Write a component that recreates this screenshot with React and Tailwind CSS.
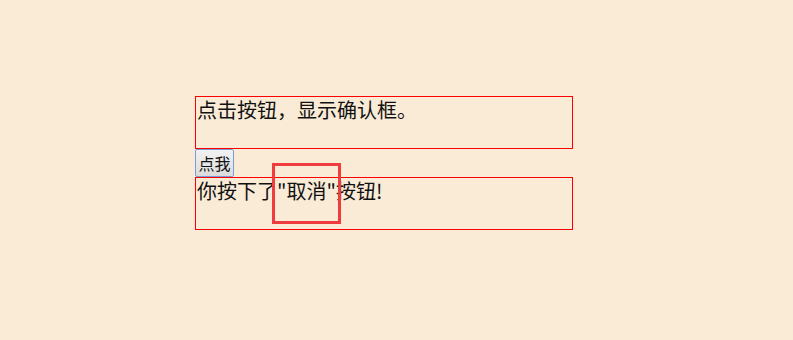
import React from "react";

export default function App() {
  const font = { fontFamily: '"Noto Sans CJK SC", "Liberation Sans", sans-serif' };
  return (
    <div className="relative w-[793px] h-[340px] bg-[#faebd7] overflow-hidden" style={font}>
      <div className="pt-[96px] pl-[195px] flex flex-col items-start">
        <div className="w-[378px] h-[53px] border border-[#ff0000] text-[20px] leading-[26px] text-[#111] pl-px">
          点击按钮，显示确认框。
        </div>
        <button className="h-[28px] w-[39px] border border-[#7a9cd8] rounded-[2px] bg-gradient-to-b from-[#f2f2f2] to-[#dcdcdc] text-[16px] leading-[20px] text-[#111] flex items-center justify-center p-0">
          点我
        </button>
        <div className="w-[378px] h-[53px] border border-[#ff0000] text-[20px] leading-[26px] text-[#111] pl-px">
          你按下了"取消"按钮!
        </div>
      </div>
      <div className="absolute left-[272px] top-[163px] w-[69px] h-[61px] border-[3px] border-[#f03c3c]"></div>
    </div>
  );
}
